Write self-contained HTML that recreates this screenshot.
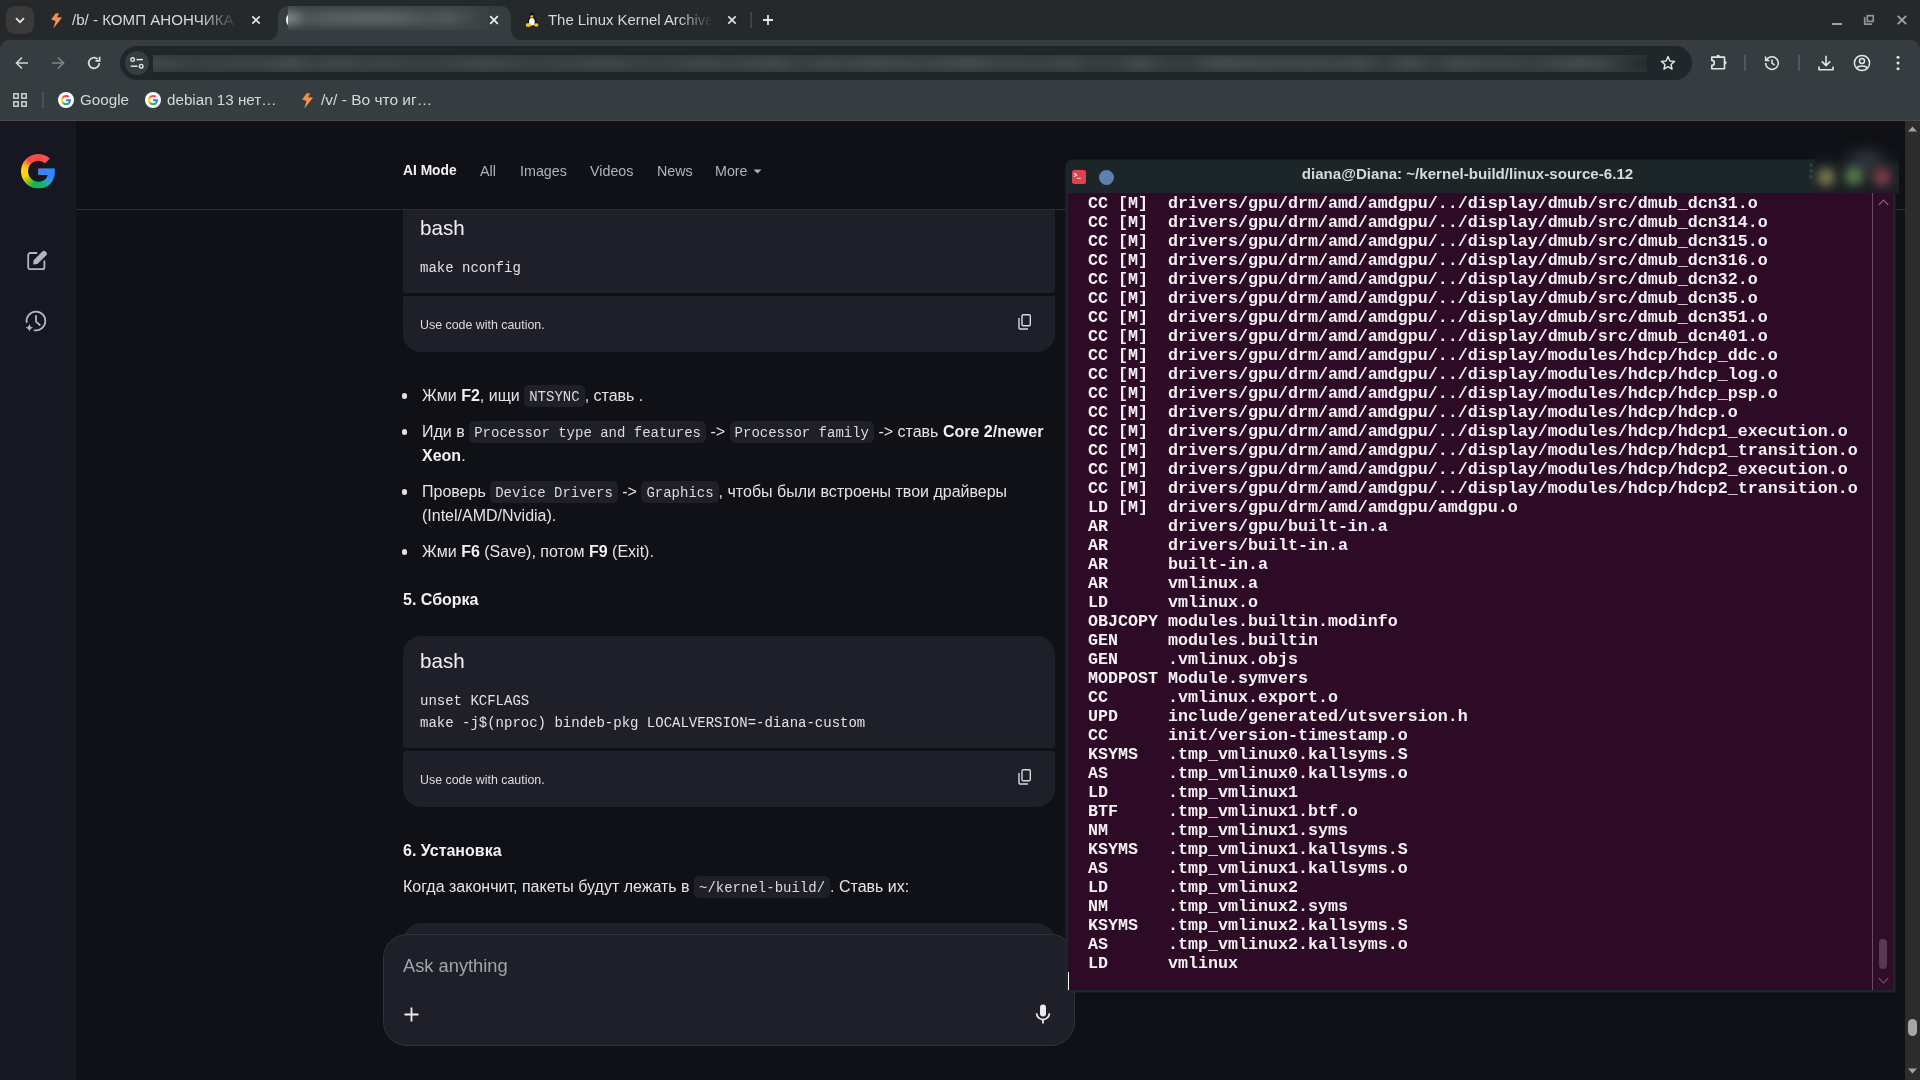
<!DOCTYPE html>
<html lang="en">
<head>
<meta charset="utf-8">
<title>AI Mode</title>
<style>
*{box-sizing:border-box;margin:0;padding:0}
html,body{width:1920px;height:1080px;overflow:hidden;background:#101116;font-family:"Liberation Sans",sans-serif;color:#e8e8ea}
.abs{position:absolute}
#root{position:relative;width:1920px;height:1080px;overflow:hidden;will-change:transform;background:transparent}

/* ---------- chrome ---------- */
#tabstrip{left:0;top:0;width:1920px;height:52px;background:#25292c}
#toolbar{left:0;top:40px;width:1920px;height:81px;background:#363d40;border-bottom:1px solid #494b4b;border-top-left-radius:9px;border-top-right-radius:9px}
#tabsearch{left:6px;top:6px;width:28px;height:28px;border-radius:9px;background:#3a3a3a}
.tabtitle{font-size:14.9px;color:#d6d9da;white-space:nowrap;overflow:hidden;letter-spacing:0}
#activetab{left:278px;top:6px;width:233px;height:34px;background:#363d40;border-radius:10px 10px 0 0}
#activetab:before,#activetab:after{content:"";position:absolute;bottom:0;width:10px;height:10px}
#activetab:before{left:-10px;background:radial-gradient(circle at 0 0,rgba(0,0,0,0) 9.5px,#363d40 10.5px)}
#activetab:after{right:-10px;background:radial-gradient(circle at 100% 0,rgba(0,0,0,0) 9.5px,#363d40 10.5px)}
#omnibox{left:120px;top:46px;width:1572px;height:34px;border-radius:17px;background:#20272a}
#sitechip{left:125px;top:51px;width:24px;height:24px;border-radius:12px;background:#363d40}
.bm{font-size:15.2px;color:#d5d8d9;white-space:nowrap;top:91px;line-height:18px}
.vsep{width:1px;background:#596265}
svg{display:block;overflow:visible}

/* ---------- page ---------- */
#page{left:0;top:121px;width:1905px;height:959px;background:#101116;overflow:hidden}
#sidebar{left:0;top:0;width:76px;height:959px;background:#171722}
#hdrline{left:76px;top:88px;width:1829px;height:1px;background:#2b2c31}
.nav{top:41px;font-size:14.3px;line-height:18px;color:#b0b3bc;white-space:nowrap}
#pscroll{left:1905px;top:121px;width:15px;height:959px;background:#2c2c2c}

/* ---------- terminal ---------- */
#term{left:1066px;top:160px;width:829px;height:832px;background:#1c2628;border-radius:6px 6px 0 0;box-shadow:0 0 0 1px rgba(34,48,51,0.35)}
#termbody{left:2px;top:33px;width:825px;height:797px;background:#2d0b26;overflow:hidden}
#termtext{left:0;top:1px;font-family:"Liberation Mono",monospace;font-weight:bold;font-size:16.67px;line-height:19px;color:#f4f0f3;white-space:pre}
#termtitle{left:-13px;top:3px;width:829px;text-align:center;font-size:15.1px;font-weight:bold;color:#d7dadb;line-height:22px}

#termicon{left:6px;top:10px;width:14px;height:14px;border-radius:2.5px;background:#de4252}
#termdot{left:33px;top:9.5px;width:15px;height:15px;border-radius:50%;background:#5f80ae}
#termsb{left:804px;top:0;width:21px;height:797px;background:#2f0c28;border-left:1px solid #6b4a64}
#termthumb{left:6px;top:746px;width:8px;height:30px;border-radius:4px;background:#573a52}
#termcursor{left:0;top:779px;width:1px;height:18px;background:#fff}
.blurdot{width:18px;height:18px;border-radius:50%;filter:blur(5px)}

/* page content (coordinates relative to #page whose top is y=121) */
.cb{left:403px;width:652px;background:#1e1f29}
.cbhead{font-size:20.6px;line-height:24px;color:#f0f0f3;left:17px}
.code{font-family:"Liberation Mono",monospace;font-size:14px;line-height:22px;color:#e2e2e6;white-space:pre;left:17px}
.caution{font-size:12.4px;line-height:16px;color:#dcdce0;left:17px}
.txt{font-size:16px;line-height:24px;color:#e4e4e8;white-space:nowrap}
.txt b{color:#f1f1f4}
.ic{font-family:"Liberation Mono",monospace;font-size:14px;background:#1e1f29;border-radius:5px;padding:4px 5px 2px 5px;color:#dadae0}
.bul{width:5.4px;height:5.4px;border-radius:50%;background:#e4e4e8;left:401.8px;margin-top:-0.6px}
#inputbox{left:383px;top:813px;width:692px;height:112px;border-radius:24px;background:#1e1f29;border:1px solid #30323b}
</style>
</head>
<body>
<div id="root">

<!-- ======= CHROME TAB STRIP ======= -->
<div id="tabstrip" class="abs"></div>
<div id="toolbar" class="abs"></div>
<div id="tabsearch" class="abs"></div>
<div id="activetab" class="abs"></div>
<!-- tab search -->
<svg class="abs" style="left:15px;top:17px" width="10" height="7" viewBox="0 0 10 7"><path d="M1 1.2 L5 5.2 L9 1.2" fill="none" stroke="#e6e6e6" stroke-width="1.7"/></svg>
<!-- tab 1 -->
<div class="abs" style="left:51px;top:12.5px"><svg width="12" height="16" viewBox="0 0 12 16"><defs><linearGradient id="bg1" x1="0" y1="0" x2="0" y2="1"><stop offset="0" stop-color="#f3843a"/><stop offset="1" stop-color="#f8a468"/></linearGradient></defs><path d="M4.6 0.2 L8 0.2 L6.2 4.2 L11.1 4.4 L2.3 15.6 L4.6 8.1 L0.2 6.6 Z" fill="url(#bg1)"/></svg></div>
<div class="abs tabtitle" style="left:72px;top:10px;width:170px;font-size:15.1px;line-height:20px;-webkit-mask-image:linear-gradient(90deg,#000 128px,transparent 166px);mask-image:linear-gradient(90deg,#000 128px,transparent 166px)">/b/ - КОМП АНОНЧИКА ТРЕД</div>
<div class="abs" style="left:251px;top:15px"><svg width="10" height="10" viewBox="0 0 10 10"><path d="M1.3 1.3 L8.7 8.7 M8.7 1.3 L1.3 8.7" stroke="#dfe2e3" stroke-width="1.7" fill="none"/></svg></div>
<!-- active tab content (blurred) -->
<div class="abs" style="left:286px;top:12px;width:16px;height:16px;border-radius:50%;background:#f0f0f0"></div>
<div class="abs" style="left:288px;top:6px;width:200px;height:24px;overflow:hidden;background:#3a4244">
  <div class="abs" style="left:-12px;top:5px;width:215px;height:14px;filter:blur(4px);background:linear-gradient(90deg,#8a9290 0,#7a8381 16px,#4e5658 30px,#586062 60px,#5c6466 100px,#586062 125px,#4b5355 150px,#525a5c 172px,#444c4e 190px,#3a4244 206px)"></div>
</div>
<div class="abs" style="left:489px;top:15px"><svg width="10" height="10" viewBox="0 0 10 10"><path d="M1.2 1.2 L8.8 8.8 M8.8 1.2 L1.2 8.8" stroke="#eef0f0" stroke-width="1.7" fill="none"/></svg></div>
<!-- tab 3 -->
<svg class="abs" style="left:524px;top:12px" width="16" height="16" viewBox="0 0 16 16"><path d="M5.7 3.6 L10.1 3.6 L12.9 10.4 L11.6 14.7 L4.4 14.7 L3.3 11.4 Z" fill="#0c0c0e"/><ellipse cx="7.9" cy="9.8" rx="2.9" ry="3.9" fill="#fafafa"/><ellipse cx="4.4" cy="13.1" rx="2.7" ry="2" fill="#f9c40f"/><ellipse cx="12.2" cy="13" rx="2.3" ry="1.8" fill="#f9c40f"/><ellipse cx="7.9" cy="2.7" rx="2.2" ry="2.2" fill="#0c0c0e"/><ellipse cx="7.9" cy="3.2" rx="1.9" ry="0.45" fill="#aeb2be"/><ellipse cx="7.75" cy="4.8" rx="1.7" ry="1" fill="#f3b308"/></svg>
<div class="abs tabtitle" style="left:548px;top:10px;width:170px;line-height:20px;-webkit-mask-image:linear-gradient(90deg,#000 130px,transparent 165px);mask-image:linear-gradient(90deg,#000 130px,transparent 165px)">The Linux Kernel Archives</div>
<div class="abs" style="left:727px;top:15px"><svg width="10" height="10" viewBox="0 0 10 10"><path d="M1.3 1.3 L8.7 8.7 M8.7 1.3 L1.3 8.7" stroke="#dfe2e3" stroke-width="1.7" fill="none"/></svg></div>
<div class="abs vsep" style="left:750px;top:12px;height:16px;width:2px;background:#3c4346"></div>
<svg class="abs" style="left:762px;top:14px" width="12" height="12" viewBox="0 0 12 12"><path d="M6 1 V11 M1 6 H11" stroke="#e4e6e7" stroke-width="1.8" fill="none"/></svg>
<!-- window controls -->
<div class="abs" style="left:1832px;top:23px;width:10px;height:2px;background:#a0a5a7"></div>
<svg class="abs" style="left:1863px;top:14px" width="12" height="12" viewBox="0 0 12 12"><rect x="4.3" y="1.7" width="5.9" height="5.7" fill="none" stroke="#8f9496" stroke-width="1.7"/><path d="M1.7 3 V10.1 H9.2" fill="none" stroke="#8f9496" stroke-width="1.7"/></svg>
<svg class="abs" style="left:1897px;top:15px" width="10" height="10" viewBox="0 0 10 10"><path d="M0.8 0.8 L9.2 9.2 M9.2 0.8 L0.8 9.2" stroke="#9ea3a5" stroke-width="1.9" fill="none"/></svg>

<!-- toolbar nav -->
<svg class="abs" style="left:15px;top:56px" width="14" height="14" viewBox="0 0 14 14"><path d="M13 7 H2 M7 1.5 L1.5 7 L7 12.5" fill="none" stroke="#d0d4d5" stroke-width="1.6"/></svg>
<svg class="abs" style="left:51px;top:56px" width="14" height="14" viewBox="0 0 14 14"><path d="M1 7 H12 M7 1.5 L12.5 7 L7 12.5" fill="none" stroke="#7e8689" stroke-width="1.7"/></svg>
<svg class="abs" style="left:87px;top:56px" width="14" height="14" viewBox="0 0 14 14"><path d="M12.3 7 A5.3 5.3 0 1 1 10.6 3.1" fill="none" stroke="#dfe2e3" stroke-width="1.7"/><path d="M12.6 0.8 V4.9 H8.5" fill="none" stroke="#dfe2e3" stroke-width="1.7"/></svg>
<div id="omnibox" class="abs"></div>
<div id="sitechip" class="abs"></div>
<svg class="abs" style="left:130px;top:57px" width="14" height="12" viewBox="0 0 14 12"><circle cx="2.6" cy="2.6" r="1.8" fill="none" stroke="#e2e5e6" stroke-width="1.4"/><path d="M6.5 2.6 H13" stroke="#e2e5e6" stroke-width="1.5"/><circle cx="11.2" cy="9.2" r="1.8" fill="none" stroke="#e2e5e6" stroke-width="1.4"/><path d="M0.8 9.2 H7.5" stroke="#e2e5e6" stroke-width="1.5"/></svg>
<!-- blurred url -->
<div class="abs" style="left:153px;top:55px;width:1494px;height:17px;overflow:hidden;background:#30373a"><div class="abs" style="left:-10px;top:2px;width:1514px;height:13px;filter:blur(3px);background:linear-gradient(90deg,#444b4d 0.0%,#3e4547 1.6%,#383f41 3.2%,#3a4143 4.8%,#3c4345 6.4%,#3c4345 8.0%,#444b4d 9.7%,#3a4143 11.3%,#404749 12.9%,#3a4143 14.5%,#3c4345 16.1%,#383f41 17.7%,#383f41 19.3%,#3c4345 20.9%,#404749 22.5%,#3c4345 24.1%,#383f41 25.7%,#3a4143 27.3%,#3c4345 28.9%,#404749 30.6%,#3a4143 32.2%,#383f41 33.8%,#3a4143 35.4%,#404749 37.0%,#3a4143 38.6%,#3e4547 40.2%,#42494b 41.8%,#383f41 43.4%,#3e4547 45.0%,#3c4345 46.6%,#42494b 48.2%,#3e4547 49.9%,#3c4345 51.5%,#404749 53.1%,#444b4d 54.7%,#3c4345 56.3%,#3c4345 57.9%,#3a4143 59.5%,#404749 61.1%,#363d3f 62.7%,#383f41 64.3%,#444b4d 65.9%,#363d3f 67.5%,#363d3f 69.2%,#444b4d 70.8%,#42494b 72.4%,#404749 74.0%,#3e4547 75.6%,#404749 77.2%,#3c4345 78.8%,#42494b 80.4%,#363d3f 82.0%,#444b4d 83.6%,#363d3f 85.2%,#42494b 86.8%,#3c4345 88.5%,#3c4345 90.1%,#383f41 91.7%,#3e4547 93.3%,#444b4d 94.9%,#3e4547 96.5%,#2a3134 98.5%,#20272a 100%)"></div></div>
<!-- star -->
<svg class="abs" style="left:1660px;top:55px" width="16" height="16" viewBox="0 0 16 16"><path d="M8 1.6 L9.9 6 L14.6 6.4 L11 9.5 L12.1 14.1 L8 11.6 L3.9 14.1 L5 9.5 L1.4 6.4 L6.1 6 Z" fill="none" stroke="#e2e5e6" stroke-width="1.4" stroke-linejoin="round"/></svg>
<!-- extensions -->
<svg class="abs" style="left:1710px;top:53px" width="18" height="18" viewBox="0 0 18 18"><path d="M1.8 4.1 H14.5 V15.7 H1.8 V12.4 A2.5 2.5 0 0 0 1.8 7.4 Z" fill="none" stroke="#e2e5e6" stroke-width="1.6" stroke-linejoin="round"/><path d="M6.2 3.7 A1.9 1.9 0 0 1 10 3.7 Z" fill="#e2e5e6"/><path d="M15 8 A1.6 1.6 0 0 1 15 11.2 Z" fill="#e2e5e6"/></svg>
<div class="abs vsep" style="left:1744px;top:55px;height:16px;width:2px;background:#50595c"></div>
<!-- history -->
<svg class="abs" style="left:1764px;top:55px" width="16" height="16" viewBox="0 0 16 16"><path d="M2.4 5.2 A6.3 6.3 0 1 1 1.7 8" fill="none" stroke="#e2e5e6" stroke-width="1.5"/><path d="M1.6 1.6 V5.4 H5.4" fill="none" stroke="#e2e5e6" stroke-width="1.5"/><path d="M8 4.4 V8.2 L10.6 10.2" fill="none" stroke="#e2e5e6" stroke-width="1.5"/></svg>
<div class="abs vsep" style="left:1798px;top:55px;height:16px;width:2px;background:#50595c"></div>
<!-- download -->
<svg class="abs" style="left:1818px;top:55px" width="16" height="16" viewBox="0 0 16 16"><path d="M8 0.8 V10.4 M3.8 6.4 L8 10.6 L12.2 6.4" fill="none" stroke="#e2e5e6" stroke-width="1.6"/><path d="M1 11.5 V14.8 H15 V11.5" fill="none" stroke="#e2e5e6" stroke-width="1.6" stroke-linejoin="round"/></svg>
<!-- profile -->
<svg class="abs" style="left:1853px;top:54px" width="18" height="18" viewBox="0 0 18 18"><circle cx="9" cy="9" r="7.6" fill="none" stroke="#e2e5e6" stroke-width="1.5"/><circle cx="9" cy="7" r="2.5" fill="none" stroke="#e2e5e6" stroke-width="1.5"/><path d="M3.6 14 C5.5 11.4 12.5 11.4 14.4 14" fill="none" stroke="#e2e5e6" stroke-width="1.5"/></svg>
<!-- menu -->
<svg class="abs" style="left:1896px;top:55px" width="4" height="16" viewBox="0 0 4 16"><circle cx="2" cy="2.3" r="1.5" fill="#e2e5e6"/><circle cx="2" cy="8" r="1.5" fill="#e2e5e6"/><circle cx="2" cy="13.7" r="1.5" fill="#e2e5e6"/></svg>

<!-- bookmarks bar -->
<svg class="abs" style="left:13px;top:93px" width="14" height="14" viewBox="0 0 14 14"><g fill="none" stroke="#cfd3d4" stroke-width="1.5"><rect x="0.8" y="0.8" width="4.4" height="4.4"/><rect x="8.8" y="0.8" width="4.4" height="4.4"/><rect x="0.8" y="8.8" width="4.4" height="4.4"/><rect x="8.8" y="8.8" width="4.4" height="4.4"/></g></svg>
<div class="abs vsep" style="left:42px;top:92px;height:16px;width:2px;background:#4a5255"></div>
<div class="abs" style="left:58px;top:92px;width:16px;height:16px;border-radius:50%;background:#fff"><div class="abs" style="left:2.9px;top:2.9px;width:48px;height:48px;transform:scale(0.2125);transform-origin:0 0"><div class="abs" style="left:0;top:0;width:48px;height:48px;clip-path:path('M24 9.5c3.54 0 6.71 1.22 9.21 3.6l6.85-6.85C35.9 2.38 30.47 0 24 0 14.62 0 6.51 5.38 2.56 13.22l7.98 6.19C12.43 13.72 17.74 9.5 24 9.5z M46.98 24.55c0-1.57-.15-3.09-.38-4.55H24v9.02h12.94c-.58 2.96-2.26 5.48-4.78 7.18l7.73 6c4.51-4.18 7.09-10.36 7.09-17.65z M10.53 28.59c-.48-1.45-.76-2.99-.76-4.59s.27-3.14.76-4.59l-7.98-6.19C.92 16.46 0 20.12 0 24c0 3.88.92 7.54 2.56 10.78l7.97-6.19z M24 48c6.48 0 11.93-2.13 15.89-5.81l-7.73-6c-2.15 1.45-4.92 2.3-8.16 2.3-6.26 0-11.57-4.22-13.47-9.91l-7.98 6.19C6.51 42.62 14.62 48 24 48z');background:conic-gradient(from 0deg at 24px 24px,#fd4a47 0deg,#ff4d5c 50deg,#3685fb 58deg,#3685fb 118deg,#22a6c9 140deg,#10b65c 165deg,#10b65c 200deg,#8ac41c 225deg,#ffd314 250deg,#ffd314 280deg,#ff9a2b 300deg,#fd4a47 320deg,#fd4a47 360deg)"></div><div class="abs" style="left:0;top:0;width:48px;height:48px;background:#3685fb;clip-path:path('M24 20 H46.6 c.23 1.46 .38 2.98 .38 4.55 0 1.5 -.1 3 -.36 4.47 H24 Z')"></div></div></div>
<div class="abs bm" style="left:80px">Google</div>
<div class="abs" style="left:145px;top:92px;width:16px;height:16px;border-radius:50%;background:#fff"><div class="abs" style="left:2.9px;top:2.9px;width:48px;height:48px;transform:scale(0.2125);transform-origin:0 0"><div class="abs" style="left:0;top:0;width:48px;height:48px;clip-path:path('M24 9.5c3.54 0 6.71 1.22 9.21 3.6l6.85-6.85C35.9 2.38 30.47 0 24 0 14.62 0 6.51 5.38 2.56 13.22l7.98 6.19C12.43 13.72 17.74 9.5 24 9.5z M46.98 24.55c0-1.57-.15-3.09-.38-4.55H24v9.02h12.94c-.58 2.96-2.26 5.48-4.78 7.18l7.73 6c4.51-4.18 7.09-10.36 7.09-17.65z M10.53 28.59c-.48-1.45-.76-2.99-.76-4.59s.27-3.14.76-4.59l-7.98-6.19C.92 16.46 0 20.12 0 24c0 3.88.92 7.54 2.56 10.78l7.97-6.19z M24 48c6.48 0 11.93-2.13 15.89-5.81l-7.73-6c-2.15 1.45-4.92 2.3-8.16 2.3-6.26 0-11.57-4.22-13.47-9.91l-7.98 6.19C6.51 42.62 14.62 48 24 48z');background:conic-gradient(from 0deg at 24px 24px,#fd4a47 0deg,#ff4d5c 50deg,#3685fb 58deg,#3685fb 118deg,#22a6c9 140deg,#10b65c 165deg,#10b65c 200deg,#8ac41c 225deg,#ffd314 250deg,#ffd314 280deg,#ff9a2b 300deg,#fd4a47 320deg,#fd4a47 360deg)"></div><div class="abs" style="left:0;top:0;width:48px;height:48px;background:#3685fb;clip-path:path('M24 20 H46.6 c.23 1.46 .38 2.98 .38 4.55 0 1.5 -.1 3 -.36 4.47 H24 Z')"></div></div></div>
<div class="abs bm" style="left:167px">debian 13 нет…</div>
<div class="abs" style="left:302px;top:92.7px"><svg width="12" height="16" viewBox="0 0 12 16"><defs><linearGradient id="bg2" x1="0" y1="0" x2="0" y2="1"><stop offset="0" stop-color="#f3843a"/><stop offset="1" stop-color="#f8a468"/></linearGradient></defs><path d="M4.6 0.2 L8 0.2 L6.2 4.2 L11.1 4.4 L2.3 15.6 L4.6 8.1 L0.2 6.6 Z" fill="url(#bg2)"/></svg></div>
<div class="abs bm" style="left:321px;font-size:15.5px">/v/ - Во что иг…</div>


<!-- ======= PAGE ======= -->
<div id="page" class="abs">
  <div id="sidebar" class="abs"></div>
  <div id="hdrline" class="abs"></div>
  <!-- sidebar icons -->
  <div class="abs" style="left:21px;top:32.6px;width:48px;height:48px;transform:scale(0.72);transform-origin:0 0"><div class="abs" style="left:0;top:0;width:48px;height:48px;clip-path:path('M24 9.5c3.54 0 6.71 1.22 9.21 3.6l6.85-6.85C35.9 2.38 30.47 0 24 0 14.62 0 6.51 5.38 2.56 13.22l7.98 6.19C12.43 13.72 17.74 9.5 24 9.5z M46.98 24.55c0-1.57-.15-3.09-.38-4.55H24v9.02h12.94c-.58 2.96-2.26 5.48-4.78 7.18l7.73 6c4.51-4.18 7.09-10.36 7.09-17.65z M10.53 28.59c-.48-1.45-.76-2.99-.76-4.59s.27-3.14.76-4.59l-7.98-6.19C.92 16.46 0 20.12 0 24c0 3.88.92 7.54 2.56 10.78l7.97-6.19z M24 48c6.48 0 11.93-2.13 15.89-5.81l-7.73-6c-2.15 1.45-4.92 2.3-8.16 2.3-6.26 0-11.57-4.22-13.47-9.91l-7.98 6.19C6.51 42.62 14.62 48 24 48z');background:conic-gradient(from 0deg at 24px 24px,#fd4a47 0deg,#ff4d5c 50deg,#3685fb 58deg,#3685fb 118deg,#22a6c9 140deg,#10b65c 165deg,#10b65c 200deg,#8ac41c 225deg,#ffd314 250deg,#ffd314 280deg,#ff9a2b 300deg,#fd4a47 320deg,#fd4a47 360deg)"></div><div class="abs" style="left:0;top:0;width:48px;height:48px;background:#3685fb;clip-path:path('M24 20 H46.6 c.23 1.46 .38 2.98 .38 4.55 0 1.5 -.1 3 -.36 4.47 H24 Z')"></div></div>
  <svg class="abs" style="left:26px;top:128px" width="22" height="22" viewBox="0 0 22 22"><path d="M11.2 4 H4.2 A2 2 0 0 0 2.2 6 V18.2 A2 2 0 0 0 4.2 20.2 H16.4 A2 2 0 0 0 18.4 18.2 V11.4" fill="none" stroke="#b3b5bf" stroke-width="1.8"/><path d="M7.1 15.5 L7.6 11.3 L16.3 2.6 A2.3 2.3 0 0 1 19.6 2.6 L20.1 3.1 A2.3 2.3 0 0 1 20.1 6.4 L11.4 15 Z" fill="#b3b5bf"/></svg>
  <svg class="abs" style="left:25px;top:189px" width="22" height="22" viewBox="0 0 22 22"><path d="M1.6 12 A9.4 9.4 0 1 1 9.6 20.3" fill="none" stroke="#b3b5bf" stroke-width="1.8" stroke-linecap="round"/><path d="M11 6 V11.6 L14.8 15" fill="none" stroke="#b3b5bf" stroke-width="1.8" stroke-linecap="round" stroke-linejoin="round"/><path d="M4.35 13.7 Q4.9 17.1 8.3 17.7 Q4.9 18.3 4.35 21.7 Q3.8 18.3 0.4 17.7 Q3.8 17.1 4.35 13.7 Z" fill="#b3b5bf"/></svg>

  <!-- nav -->
  <div class="abs nav" style="left:403px;color:#f1f1f4;font-weight:bold;font-size:13.8px">AI Mode</div>
  <div class="abs nav" style="left:480px">All</div>
  <div class="abs nav" style="left:520px">Images</div>
  <div class="abs nav" style="left:590px">Videos</div>
  <div class="abs nav" style="left:657px">News</div>
  <div class="abs nav" style="left:715px">More</div>
  <svg class="abs" style="left:753px;top:48px" width="9" height="5" viewBox="0 0 9 5"><path d="M0.5 0.5 H8.5 L4.5 4.5 Z" fill="#b0b3bc"/></svg>

  <!-- content scroller (clipped below header line) -->
  <div class="abs" style="left:76px;top:89px;width:1829px;height:870px;overflow:hidden"><div class="abs" style="left:-76px;top:-89px;width:1905px;height:959px">

  <!-- code block 1 -->
  <div class="abs cb" style="top:60px;height:112px;border-radius:16px 16px 3px 3px">
    <div class="abs cbhead" style="top:35px">bash</div>
    <div class="abs code" style="top:76px">make nconfig</div>
  </div>
  <div class="abs cb" style="top:175px;height:56px;border-radius:3px 3px 18px 18px">
    <div class="abs caution" style="top:21px">Use code with caution.</div>
    <svg class="abs" style="left:615px;top:18px" width="14" height="16" viewBox="0 0 14 16"><rect x="4" y="0.8" width="8.3" height="11" rx="1.3" fill="none" stroke="#d8d9e2" stroke-width="1.4"/><path d="M1 4 V14 A1 1 0 0 0 2 15 H10" fill="none" stroke="#d8d9e2" stroke-width="1.4"/></svg>
  </div>

  <!-- list -->
  <div class="abs bul" style="top:273px"></div>
  <div class="abs txt" style="left:422px;top:263px">Жми <b>F2</b>, ищи <span class="ic">NTSYNC</span>, ставь .</div>
  <div class="abs bul" style="top:309px"></div>
  <div class="abs txt" style="left:422px;top:299px">Иди в <span class="ic">Processor type and features</span> -&gt; <span class="ic">Processor family</span> -&gt; ставь <b>Core 2/newer</b></div>
  <div class="abs txt" style="left:422px;top:323px"><b>Xeon</b>.</div>
  <div class="abs bul" style="top:369px"></div>
  <div class="abs txt" style="left:422px;top:359px">Проверь <span class="ic">Device Drivers</span> -&gt; <span class="ic">Graphics</span>, чтобы были встроены твои драйверы</div>
  <div class="abs txt" style="left:422px;top:383px">(Intel/AMD/Nvidia).</div>
  <div class="abs bul" style="top:429px"></div>
  <div class="abs txt" style="left:422px;top:419px">Жми <b>F6</b> (Save), потом <b>F9</b> (Exit).</div>

  <div class="abs txt" style="left:403px;top:467px"><b>5. Сборка</b></div>

  <!-- code block 2 -->
  <div class="abs cb" style="top:515px;height:112px;border-radius:18px 18px 3px 3px">
    <div class="abs cbhead" style="top:13px">bash</div>
    <div class="abs code" style="top:54px">unset KCFLAGS
make -j$(nproc) bindeb-pkg LOCALVERSION=-diana-custom</div>
  </div>
  <div class="abs cb" style="top:630px;height:56px;border-radius:3px 3px 18px 18px">
    <div class="abs caution" style="top:21px">Use code with caution.</div>
    <svg class="abs" style="left:615px;top:18px" width="14" height="16" viewBox="0 0 14 16"><rect x="4" y="0.8" width="8.3" height="11" rx="1.3" fill="none" stroke="#d8d9e2" stroke-width="1.4"/><path d="M1 4 V14 A1 1 0 0 0 2 15 H10" fill="none" stroke="#d8d9e2" stroke-width="1.4"/></svg>
  </div>

  <div class="abs txt" style="left:403px;top:718px"><b>6. Установка</b></div>
  <div class="abs txt" style="left:403px;top:754px">Когда закончит, пакеты будут лежать в <span class="ic">~/kernel-build/</span>. Ставь их:</div>

  <!-- code block 3 (peeking) -->
  <div class="abs cb" style="top:802px;height:120px;border-radius:18px 18px 3px 3px"></div>

  </div></div>

  <!-- input box -->
  <div id="inputbox" class="abs">
    <div class="abs" style="left:19px;top:20px;font-size:18.3px;line-height:22px;color:#a3a4ad">Ask anything</div>
    <svg class="abs" style="left:20px;top:72px" width="15" height="15" viewBox="0 0 15 15"><path d="M7.5 0.5 V14.5 M0.5 7.5 H14.5" stroke="#f0f0f3" stroke-width="1.8" fill="none"/></svg>
    <svg class="abs" style="left:651px;top:69px" width="16" height="21" viewBox="0 0 16 21"><rect x="5" y="0.6" width="6" height="12" rx="3" fill="#e9e9ee"/><path d="M1.6 9.2 A6.4 6.4 0 0 0 14.4 9.2" fill="none" stroke="#e9e9ee" stroke-width="1.7"/><path d="M8 15.6 V19.6" stroke="#e9e9ee" stroke-width="1.8"/></svg>
  </div>

</div>
<div id="pscroll" class="abs">
  <svg class="abs" style="left:3px;top:5px" width="9" height="6" viewBox="0 0 9 6"><path d="M0 5.5 L4.5 0.5 L9 5.5 Z" fill="#a0a0a0"/></svg>
  <div class="abs" style="left:3px;top:898px;width:9px;height:17px;border-radius:4.5px;background:#a6a6a6"></div>
  <svg class="abs" style="left:3px;top:947px" width="9" height="6" viewBox="0 0 9 6"><path d="M0 0.5 L4.5 5.5 L9 0.5 Z" fill="#a0a0a0"/></svg>
</div>

<!-- ======= TERMINAL ======= -->
<div id="term" class="abs">
  <div id="termtitle" class="abs">diana@Diana: ~/kernel-build/linux-source-6.12</div>
  
  <div id="termicon" class="abs"><svg width="14" height="14" viewBox="0 0 14 14"><path d="M2 3.2 L4.7 5 L2 6.8" fill="none" stroke="#fbe9eb" stroke-width="1.1"/><path d="M5 8.3 H8.8" stroke="#f6d3d7" stroke-width="1.1"/></svg></div>
  <div id="termdot" class="abs"></div>
  <div class="abs" style="left:743px;top:2px;width:4px;height:20px"><svg width="4" height="20" viewBox="0 0 4 20"><circle cx="2" cy="3" r="1.9" fill="#313a3c"/><circle cx="2" cy="9" r="1.9" fill="#313a3c"/><circle cx="2" cy="15" r="1.9" fill="#313a3c"/></svg></div>
  <div class="abs" style="left:749px;top:-17px;width:84px;height:51px;background:linear-gradient(#101116 0,#11141a 14px,#1a2023 22px,#1c2326 40px,#1f1d24 47px,#261624 51px)"></div>
  <div class="abs" style="left:782px;top:-10px;width:36px;height:26px;border-radius:50%;background:#2f343c;filter:blur(7px)"></div>
  <div class="abs blurdot" style="left:751px;top:8px;background:#7a774d"></div>
  <div class="abs blurdot" style="left:779px;top:7px;background:#587a4a"></div>
  <div class="abs blurdot" style="left:807px;top:8px;background:#7c3c45"></div>
  <div id="termbody" class="abs"><div id="termtext" class="abs">  CC [M]  drivers/gpu/drm/amd/amdgpu/../display/dmub/src/dmub_dcn31.o
  CC [M]  drivers/gpu/drm/amd/amdgpu/../display/dmub/src/dmub_dcn314.o
  CC [M]  drivers/gpu/drm/amd/amdgpu/../display/dmub/src/dmub_dcn315.o
  CC [M]  drivers/gpu/drm/amd/amdgpu/../display/dmub/src/dmub_dcn316.o
  CC [M]  drivers/gpu/drm/amd/amdgpu/../display/dmub/src/dmub_dcn32.o
  CC [M]  drivers/gpu/drm/amd/amdgpu/../display/dmub/src/dmub_dcn35.o
  CC [M]  drivers/gpu/drm/amd/amdgpu/../display/dmub/src/dmub_dcn351.o
  CC [M]  drivers/gpu/drm/amd/amdgpu/../display/dmub/src/dmub_dcn401.o
  CC [M]  drivers/gpu/drm/amd/amdgpu/../display/modules/hdcp/hdcp_ddc.o
  CC [M]  drivers/gpu/drm/amd/amdgpu/../display/modules/hdcp/hdcp_log.o
  CC [M]  drivers/gpu/drm/amd/amdgpu/../display/modules/hdcp/hdcp_psp.o
  CC [M]  drivers/gpu/drm/amd/amdgpu/../display/modules/hdcp/hdcp.o
  CC [M]  drivers/gpu/drm/amd/amdgpu/../display/modules/hdcp/hdcp1_execution.o
  CC [M]  drivers/gpu/drm/amd/amdgpu/../display/modules/hdcp/hdcp1_transition.o
  CC [M]  drivers/gpu/drm/amd/amdgpu/../display/modules/hdcp/hdcp2_execution.o
  CC [M]  drivers/gpu/drm/amd/amdgpu/../display/modules/hdcp/hdcp2_transition.o
  LD [M]  drivers/gpu/drm/amd/amdgpu/amdgpu.o
  AR      drivers/gpu/built-in.a
  AR      drivers/built-in.a
  AR      built-in.a
  AR      vmlinux.a
  LD      vmlinux.o
  OBJCOPY modules.builtin.modinfo
  GEN     modules.builtin
  GEN     .vmlinux.objs
  MODPOST Module.symvers
  CC      .vmlinux.export.o
  UPD     include/generated/utsversion.h
  CC      init/version-timestamp.o
  KSYMS   .tmp_vmlinux0.kallsyms.S
  AS      .tmp_vmlinux0.kallsyms.o
  LD      .tmp_vmlinux1
  BTF     .tmp_vmlinux1.btf.o
  NM      .tmp_vmlinux1.syms
  KSYMS   .tmp_vmlinux1.kallsyms.S
  AS      .tmp_vmlinux1.kallsyms.o
  LD      .tmp_vmlinux2
  NM      .tmp_vmlinux2.syms
  KSYMS   .tmp_vmlinux2.kallsyms.S
  AS      .tmp_vmlinux2.kallsyms.o
  LD      vmlinux</div>
    <div id="termcursor" class="abs"></div>
    <div id="termsb" class="abs"><div id="termthumb" class="abs"></div>
      <svg class="abs" style="left:4.5px;top:6px" width="11" height="7" viewBox="0 0 11 7"><path d="M0.7 6 L5.5 1.2 L10.3 6" fill="none" stroke="#7f6379" stroke-width="1.2"/></svg>
      <svg class="abs" style="left:4.5px;top:784px" width="11" height="7" viewBox="0 0 11 7"><path d="M0.7 1 L5.5 5.8 L10.3 1" fill="none" stroke="#6d4f66" stroke-width="1.2"/></svg>
    </div>
  </div>
</div>

</div>
</body>
</html>
